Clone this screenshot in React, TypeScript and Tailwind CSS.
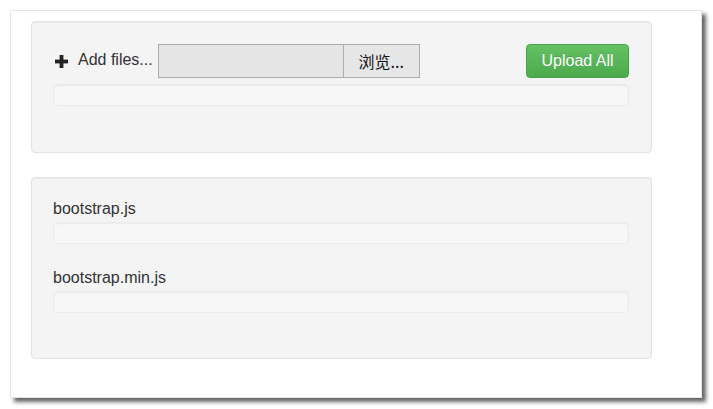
import React from "react";

function Progress({ className = "" }: { className?: string }) {
  return (
    <div
      className={
        "h-[22px] w-full rounded-[4px] border border-[#ececec] bg-[#f7f7f7] shadow-[inset_0_1px_2px_rgba(0,0,0,0.06)] " +
        className
      }
    />
  );
}

export default function App() {
  return (
    <div
      className="min-h-[409px] w-[713px] bg-white pl-[10px] pt-[10px] text-[#333]"
      style={{ fontFamily: '"Liberation Sans", Arial, "Noto Sans CJK SC", sans-serif' }}
    >
      <div className="h-[388px] w-[692px] border border-[#e6e6e6] bg-white pl-[20px] pt-[10px] shadow-[4px_4px_4px_rgba(0,0,0,0.6)]">
        {/* Panel 1 */}
        <div className="h-[132px] w-[621px] rounded-[4px] border border-[#e3e3e3] bg-[#f4f4f4] pl-[21px] pr-[22px] pt-[22px] shadow-[inset_0_1px_1px_rgba(0,0,0,0.04)]">
          <div className="flex h-[34px] items-center">
            <svg width="13" height="13" viewBox="0 0 13 13" className="ml-[2px] mt-[1px]">
              <rect x="4.6" y="0" width="3.8" height="13" fill="#222" />
              <rect x="0" y="4.6" width="13" height="3.8" fill="#222" />
            </svg>
            <span className="ml-[10px] -mt-[2px] text-[16px] leading-[22px]">Add files...</span>
            <div className="ml-[5px] flex h-[34px]">
              <div className="h-[34px] w-[186px] border border-[#adadad] bg-[#e5e5e5]" />
              <div
                className="-ml-px flex h-[34px] w-[77px] items-center justify-center border border-[#adadad] bg-[#e6e6e6] text-[16px] text-[#111]"
                style={{ fontFamily: '"Noto Sans CJK SC", sans-serif' }}
              >
                浏览...
              </div>
            </div>
            <div className="ml-auto flex h-[34px] w-[103px] items-center justify-center rounded-[4px] border border-[#48a448] bg-gradient-to-b from-[#64c264] to-[#4ca94c] text-[16px] text-white [text-shadow:0_-1px_0_rgba(0,0,0,0.15)]">
              Upload All
            </div>
          </div>
          <Progress className="mt-[6px]" />
        </div>

        {/* Panel 2 */}
        <div className="mt-[24px] h-[182px] w-[621px] rounded-[4px] border border-[#e3e3e3] bg-[#f4f4f4] pl-[21px] pr-[22px] pt-[20px] shadow-[inset_0_1px_1px_rgba(0,0,0,0.04)]">
          <div className="text-[16px] leading-[22px]">bootstrap.js</div>
          <Progress className="mt-[2px]" />
          <div className="mt-[23px] text-[16px] leading-[22px]">bootstrap.min.js</div>
          <Progress className="mt-[2px]" />
        </div>
      </div>
    </div>
  );
}
